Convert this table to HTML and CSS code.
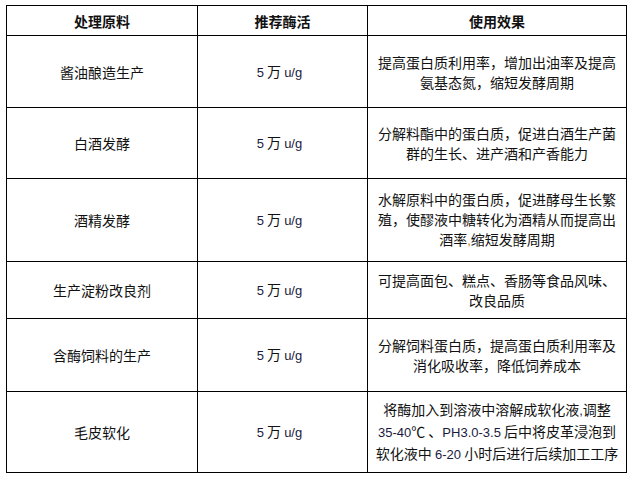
FILE: index.html
```html
<!DOCTYPE html>
<html lang="zh">
<head>
<meta charset="utf-8">
<link rel="stylesheet" href="styles.css">
</head>
<body>
<table class="enzyme">
  <colgroup>
    <col class="c1"><col class="c2"><col class="c3">
  </colgroup>
  <thead>
    <tr class="h-head">
      <th>处理原料</th><th>推荐酶活</th><th>使用效果</th>
    </tr>
  </thead>
  <tbody>
    <tr class="h-r1">
      <td>酱油酿造生产</td>
      <td class="act"><span class="lat num">5</span>万 <span class="lat">u/g</span></td>
      <td>提高蛋白质利用率，增加出油率及提高<br>氨基态氮，缩短发酵周期</td>
    </tr>
    <tr class="h-r2">
      <td>白酒发酵</td>
      <td class="act"><span class="lat num">5</span>万 <span class="lat">u/g</span></td>
      <td>分解料酯中的蛋白质，促进白酒生产菌<br>群的生长、进产酒和产香能力</td>
    </tr>
    <tr class="h-r3">
      <td>酒精发酵</td>
      <td class="act"><span class="lat num">5</span>万 <span class="lat">u/g</span></td>
      <td>水解原料中的蛋白质，促进酵母生长繁<br>殖，使醪液中糖转化为酒精从而提高出<br>酒率<span class="lat comma">,</span>缩短发酵周期</td>
    </tr>
    <tr class="h-r4">
      <td>生产淀粉改良剂</td>
      <td class="act"><span class="lat num">5</span>万 <span class="lat">u/g</span></td>
      <td>可提高面包、糕点、香肠等食品风味、<br>改良品质</td>
    </tr>
    <tr class="h-r5">
      <td>含酶饲料的生产</td>
      <td class="act"><span class="lat num">5</span>万 <span class="lat">u/g</span></td>
      <td>分解饲料蛋白质，提高蛋白质利用率及<br>消化吸收率，降低饲养成本</td>
    </tr>
    <tr class="h-r6">
      <td>毛皮软化</td>
      <td class="act"><span class="lat num">5</span>万 <span class="lat">u/g</span></td>
      <td>将酶加入到溶液中溶解成软化液<span class="lat">,</span>调整<br><span class="lat">35-40</span>℃ 、<span class="lat">PH3.0-3.5</span> 后中将皮革浸泡到<br>软化液中 <span class="lat">6-20</span> 小时后进行后续加工工序</td>
    </tr>
  </tbody>
</table>
</body>
</html>
```

FILE: styles.css
```css
html, body {
  margin: 0;
  padding: 0;
  background: #ffffff;
}

body {
  padding: 5px 0 0 6px;
  font-family: "Noto Sans CJK SC", "Liberation Sans", sans-serif;
  font-size: 14px;
  color: #111111;
}

.enzyme {
  border-collapse: collapse;
  table-layout: fixed;
  width: 620px;
}

.c1 { width: 191px; }
.c2 { width: 170px; }
.c3 { width: 259px; }

.enzyme th,
.enzyme td {
  border: 1px solid #000000;
  padding: 0 4px;
  text-align: center;
  vertical-align: middle;
  line-height: 20px;
  white-space: nowrap;
  font-weight: normal;
}

.enzyme th {
  font-weight: bold;
}

.enzyme td.act {
  padding-right: 10px;
}

.lat {
  font-family: "Liberation Sans", sans-serif;
  font-size: 13px;
  color: #1a1a40;
}

.num {
  margin-right: 3px;
}

.comma {
  color: #c07020;
}

.h-head { height: 30px; }
.h-r1 { height: 72px; }
.h-r2 { height: 71px; }
.h-r3 { height: 83px; }
.h-r4 { height: 57px; }
.h-r5 { height: 73px; }
.h-r6 { height: 81px; }
```
